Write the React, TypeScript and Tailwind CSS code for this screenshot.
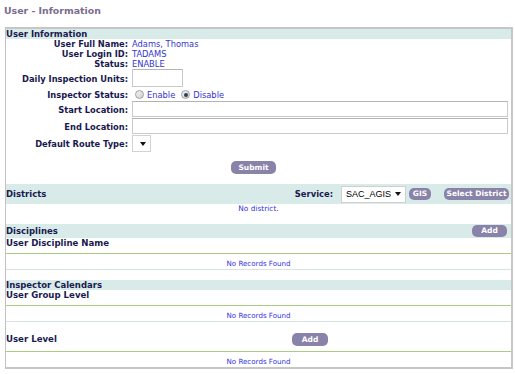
import React from "react";

// small rounded purple button used across the page
const Pill = ({ label, className }: { label: string; className: string }) => (
  <span
    className={
      "inline-flex items-center justify-center rounded-[5px] bg-[#8a83a9] text-white font-bold text-[7.5px] leading-none " +
      className
    }
  >
    {label}
  </span>
);

const Caret = () => (
  <svg width="6" height="4" viewBox="0 0 6 4">
    <polygon points="0,0 6,0 3,4" fill="#111" />
  </svg>
);

const Radio = ({ checked }: { checked?: boolean }) => (
  <span className="w-[9px] h-[9px] rounded-full border border-[#a0a0a0] bg-gradient-to-br from-[#f4f4f4] to-[#cfcfcf] flex items-center justify-center">
    {checked && <span className="w-[4px] h-[4px] rounded-full bg-[#24435e]" />}
  </span>
);

const FieldRow = ({
  label,
  height,
  children,
}: {
  label: string;
  height: string;
  children?: React.ReactNode;
}) => (
  <div className={"flex items-start " + height}>
    <div className="w-[122px] text-right font-bold text-[#18184f] h-full flex items-center justify-end">
      {label}
    </div>
    <div className="ml-[4px] flex items-start h-full">{children}</div>
  </div>
);

const Header = ({ children, height }: { children: React.ReactNode; height: string }) => (
  <div
    className={
      "flex items-center justify-between bg-[#d8ebe9] font-bold text-[8.5px] text-[#1a1a50] leading-none " +
      height
    }
  >
    {children}
  </div>
);

const NoRecords = ({ last }: { last?: boolean }) => (
  <div
    className={
      last
        ? "h-[15px] flex items-end justify-center"
        : "h-[16px] flex items-end justify-center border-b border-[#d6e3e2]"
    }
  >
    <span className="text-[7.1px] leading-[10px] text-[#3232e6]">No Records Found</span>
  </div>
);

export default function App() {
  return (
    <div className="w-[515px] h-[374px] bg-white font-['DejaVu_Sans',Verdana,sans-serif] overflow-hidden">
      <div className="h-[27px] pl-[4px] pt-[5px] flex items-start">
        <span className="text-[9.4px] leading-[12px] font-bold text-[#7b6c8f]">User - Information</span>
      </div>

      <div className="ml-[5px] w-[508px] border-l border-t-2 border-r-2 border-b-2 border-[#c6c6c6] border-l-[#c2c2c2]">
        <Header height="h-[10px]">User Information</Header>

        <div className="text-[8.3px] leading-[10px]">
          <FieldRow label="User Full Name:" height="h-[10px]">
            <span className="text-[#3434cc] font-normal leading-[10px]">Adams, Thomas</span>
          </FieldRow>
          <FieldRow label="User Login ID:" height="h-[10px]">
            <span className="text-[#3434cc] leading-[10px]">TADAMS</span>
          </FieldRow>
          <FieldRow label="Status:" height="h-[10px]">
            <span className="text-[#3434cc] leading-[10px]">ENABLE</span>
          </FieldRow>
          <FieldRow label="Daily Inspection Units:" height="h-[19px]">
            <span className="w-[51px] h-[18px] border border-[#c9c9c9] border-t-[#b5b5b5] bg-white" />
          </FieldRow>
          <FieldRow label="Inspector Status:" height="h-[13px]">
            <div className="h-full flex items-center ml-[3px] text-[#3434cc]">
              <Radio />
              <span className="ml-[3px]">Enable</span>
              <span className="ml-[6px]">
                <Radio checked />
              </span>
              <span className="ml-[3px]">Disable</span>
            </div>
          </FieldRow>
          <FieldRow label="Start Location:" height="h-[17px]">
            <span className="w-[376px] h-[16px] border border-[#cacaca] border-t-[#b3b3b3] bg-white" />
          </FieldRow>
          <FieldRow label="End Location:" height="h-[17px]">
            <span className="w-[376px] h-[16px] border border-[#cacaca] border-t-[#b3b3b3] bg-white" />
          </FieldRow>
          <FieldRow label="Default Route Type:" height="h-[17px]">
            <span className="w-[19px] h-[17px] border border-[#d2d2d2] bg-white flex items-center justify-end pr-[4px]">
              <Caret />
            </span>
          </FieldRow>
        </div>

        <div className="h-[32px] pt-[9px] flex items-start">
          <Pill label="Submit" className="ml-[225px] w-[45px] h-[13px]" />
        </div>

        <Header height="h-[20px]">
          <span>Districts</span>
          <div className="flex items-center mr-[2px]">
            <span className="text-[8.4px]">Service:</span>
            <span className="ml-[8px] w-[65px] h-[17px] bg-white border border-[#d0d0d0] flex items-center pl-[4px] pr-[4px] justify-between font-['Liberation_Sans',Arial,sans-serif] font-normal text-[9px] text-black">
              SAC_AGIS
              <Caret />
            </span>
            <Pill label="GIS" className="ml-[3px] w-[22px] h-[12px]" />
            <Pill label="Select District" className="ml-[13px] w-[65px] h-[12px]" />
          </div>
        </Header>

        <div className="h-[20px] flex justify-center">
          <span className="text-[7.4px] leading-[10px] text-[#3232e6]">No district.</span>
        </div>

        <Header height="h-[14px]">
          <span>Disciplines</span>
          <Pill label="Add" className="mr-[4px] w-[35px] h-[12px]" />
        </Header>
        <div className="h-[16px] border-b border-[#a9cd83] font-bold text-[8.6px] leading-[10px] text-[#1a1a50]">
          User Discipline Name
        </div>
        <NoRecords />

        <div className="h-[10px]" />

        <Header height="h-[10px]">Inspector Calendars</Header>
        <div className="h-[16px] border-b border-[#a9cd83] font-bold text-[8.6px] leading-[10px] text-[#1a1a50]">
          User Group Level
        </div>
        <NoRecords />

        <div className="h-[30px] border-b border-[#a9cd83] flex items-end pb-[5px] font-bold text-[8.6px] leading-[13px] text-[#1a1a50]">
          <span className="w-[286px]">User Level</span>
          <Pill label="Add" className="w-[36px] h-[13px]" />
        </div>
        <NoRecords last />
      </div>
    </div>
  );
}
